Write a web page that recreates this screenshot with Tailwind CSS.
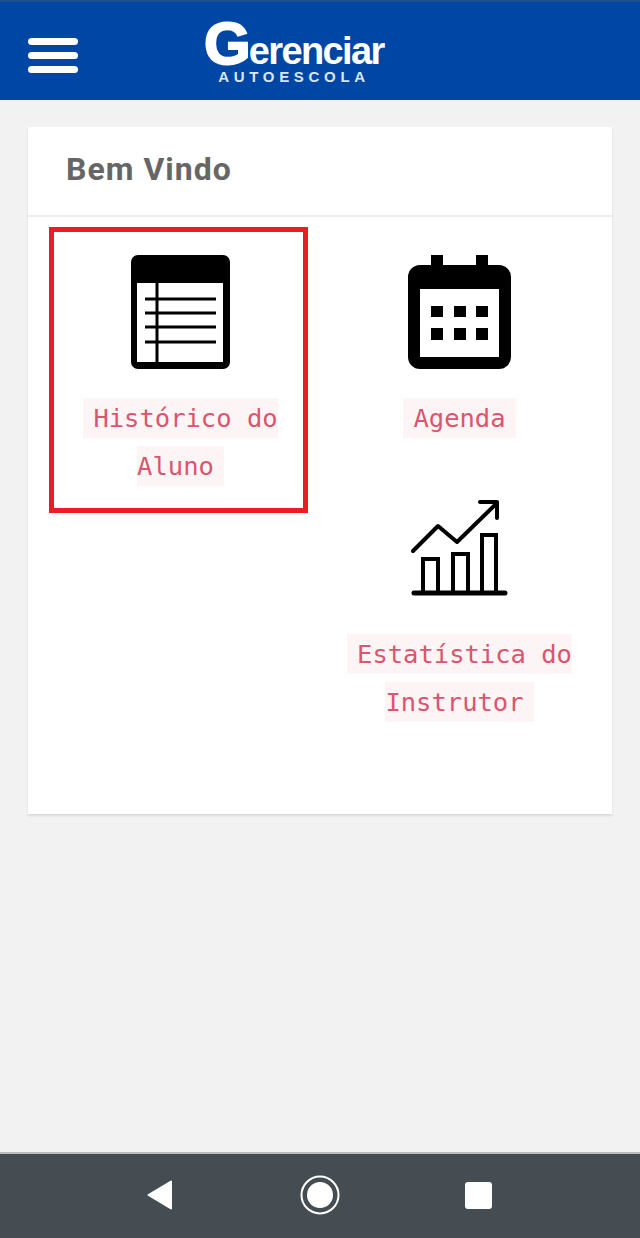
<!DOCTYPE html>
<html lang="en">
<head>
    <meta charset="UTF-8">
    <meta name="viewport" content="width=device-width, initial-scale=1.0">
    <title>Gerenciar Autoescola</title>
    <script src="https://cdn.jsdelivr.net/npm/@tailwindcss/browser@4"></script>
</head>
<body class="bg-[#f2f2f2] h-[1238px] w-[640px] overflow-hidden flex flex-col font-['Roboto',sans-serif]">
    <!-- Top bar -->
    <header class="h-[100px] shrink-0 bg-[#0046a4] border-t-2 border-[#204f90] flex items-center pl-[28px]">
        <div class="w-[50px] flex flex-col gap-[7px] mt-[9px]">
            <span class="block h-[7px] bg-white rounded-full"></span>
            <span class="block h-[7px] bg-white rounded-full"></span>
            <span class="block h-[7px] bg-white rounded-full"></span>
        </div>
        <div class="ml-[126px] w-[180px] flex flex-col text-white font-['Liberation_Sans',sans-serif] font-bold">
            <div class="flex items-baseline h-[50px] leading-[50px]">
                <span class="text-[60px] tracking-[-2px] [-webkit-text-stroke:2px_white]">G</span>
                <span class="text-[38px] tracking-[-1.6px]">erenciar</span>
            </div>
            <div class="text-[15px] leading-[14px] tracking-[4.7px] text-center text-[#dbe6f5] mt-[1px]">AUTOESCOLA</div>
        </div>
    </header>

    <!-- Card -->
    <main class="mt-[27px] mx-[28px] h-[687px] bg-white shadow-[0_2px_2px_rgba(0,0,0,0.1)]">
        <div class="h-[90px] border-b-2 border-[#eeeeee] pl-[38px] pb-[4px] flex items-center">
            <h1 class="text-[32px] tracking-[1px] font-bold text-[#666666]">Bem Vindo</h1>
        </div>
        <div class="grid grid-cols-[259px_303px] pl-[21px] pt-[10px] text-center font-['DejaVu_Sans_Mono',monospace] text-[25.5px] leading-[48px] text-[#d9566e]">
            <!-- Left column -->
            <a class="block h-[286px] border-[5px] border-[#ec1c24] pt-[23px] pl-[22px] pr-[18px]">
                <svg class="mx-auto block mb-[25px]" width="99" height="114" viewBox="0 0 99 114">
                    <rect width="99" height="114" rx="7" fill="#000"/>
                    <rect x="6" y="28" width="86" height="79" fill="#fff"/>
                    <path d="M14 44H85M14 58H85M14 72H85M14 87H85M26 28V107" stroke="#000" stroke-width="3" fill="none"/>
                </svg>
                <span class="bg-[#fdf4f6] px-[10px] py-[5px]">Histórico do Aluno</span>
            </a>
            <!-- Right column -->
            <div class="flex flex-col items-center pt-[28px]">
                <a class="block">
                    <svg class="mx-auto block mb-[25px]" width="103" height="114" viewBox="0 0 103 114">
                        <path d="M23 0H35V10H68V0H80V10H91A12 12 0 0 1 103 22V102A12 12 0 0 1 91 114H12A12 12 0 0 1 0 102V22A12 12 0 0 1 12 10H23Z" fill="#000"/>
                        <rect x="12" y="34" width="79" height="68" fill="#fff"/>
                        <path d="M23 51h12v11h-12zM46 51h12v11h-12zM68 51h12v11h-12zM23 73h12v12h-12zM46 73h12v12h-12zM68 73h12v12h-12z" fill="#000"/>
                    </svg>
                    <span class="bg-[#fdf4f6] px-[10px] py-[5px]">Agenda</span>
                </a>
                <a class="block mt-[58px] w-[240px]">
                    <svg class="mx-auto block mb-[32px]" width="97" height="98" viewBox="0 0 97 98" fill="none" stroke="#000" stroke-width="4">
                        <path d="M2 51L27 26L46 42L86 3" stroke-linecap="round" stroke-linejoin="round"/>
                        <path d="M69 2H86V18" stroke-linecap="round" stroke-linejoin="round"/>
                        <path d="M12 93V59H27V93M42 93V54H57V93M71 93V35H85V93"/>
                        <path d="M3 93H94" stroke-width="5" stroke-linecap="round"/>
                    </svg>
                    <span class="bg-[#fdf4f6] px-[10px] py-[5px]">Estatística do Instrutor</span>
                </a>
            </div>
        </div>
    </main>

    <!-- Android nav bar -->
    <footer class="mt-auto h-[86px] shrink-0 bg-[#454d52] border-t-2 border-[#b8bcbf] flex items-center pl-[147px] pb-[2px]">
        <svg class="mr-[127px]" width="26" height="30" viewBox="0 0 26 30">
            <path d="M24 1.5V28.5L1.5 15Z" fill="#fff" stroke="#fff" stroke-width="2" stroke-linejoin="round"/>
        </svg>
        <svg class="mr-[125px]" width="40" height="40" viewBox="0 0 40 40">
            <circle cx="20" cy="20" r="18.5" fill="none" stroke="#fff" stroke-width="2"/>
            <circle cx="20" cy="20" r="13" fill="#fff"/>
        </svg>
        <span class="block w-[27px] h-[27px] bg-white rounded-[3px]"></span>
    </footer>
</body>
</html>
